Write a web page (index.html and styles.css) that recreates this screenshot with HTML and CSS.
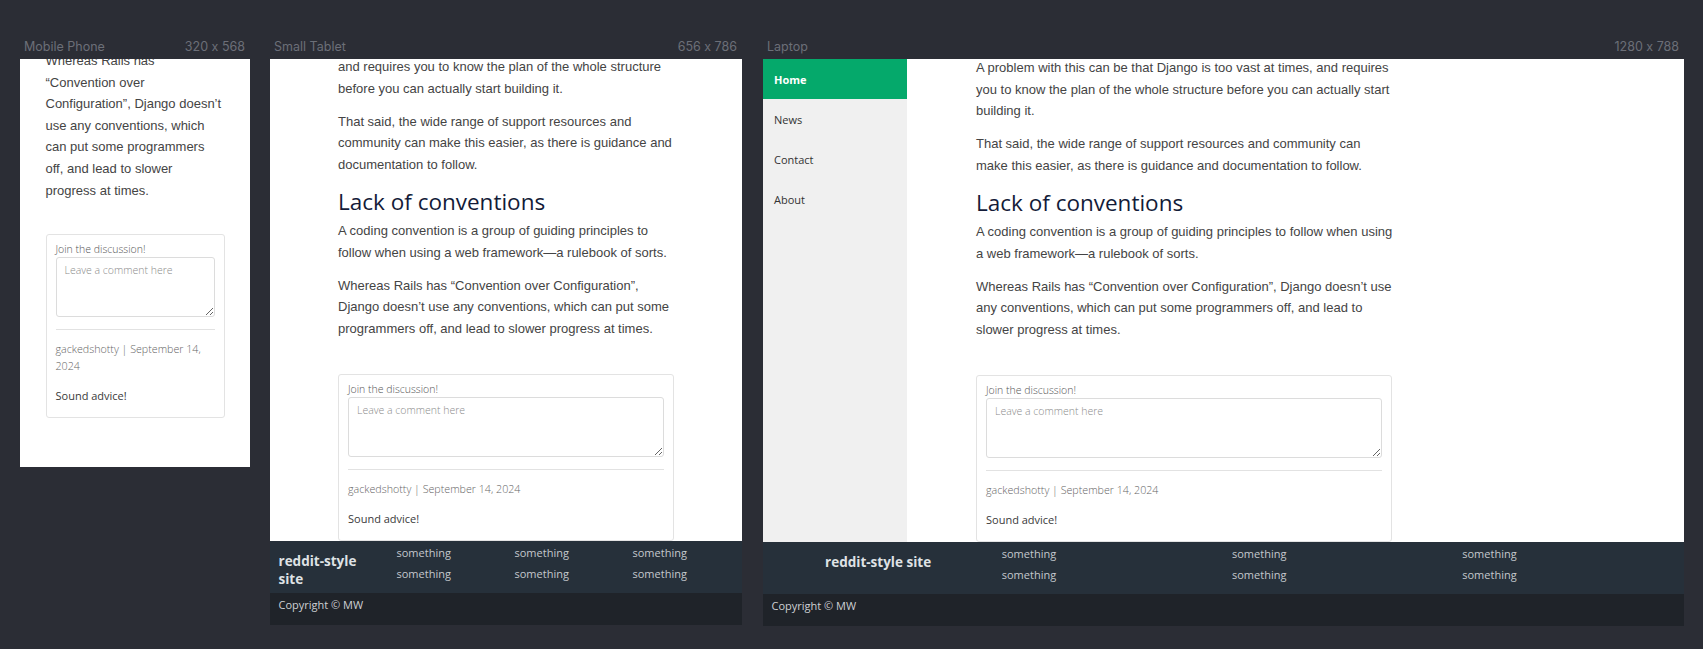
FILE: index.html
```html
<!DOCTYPE html>
<html lang="en">
<head>
<meta charset="utf-8">
<title>Responsive preview</title>
<link rel="stylesheet" href="styles.css">
</head>
<body>
<div class="stage">

  <section class="device device-phone">
    <header class="device-label"><span>Mobile Phone</span><span>320 x 568</span></header>
    <div class="screen">
      <div class="viewport">
        <article class="article">
          <p>Whereas Rails has “Convention over Configuration”, Django doesn’t use any conventions, which can put some programmers off, and lead to slower progress at times.</p>
          <div class="comments">
            <label class="comments-label">Join the discussion!</label>
            <textarea class="comments-input" placeholder="Leave a comment here"></textarea>
            <hr class="comments-rule">
            <p class="comment-meta">gackedshotty | September 14, 2024</p>
            <p class="comment-body">Sound advice!</p>
          </div>
        </article>
      </div>
    </div>
  </section>

  <section class="device device-tablet">
    <header class="device-label"><span>Small Tablet</span><span>656 x 786</span></header>
    <div class="screen">
      <div class="viewport">
        <article class="article">
          <p>and requires you to know the plan of the whole structure before you can actually start building it.</p>
          <p>That said, the wide range of support resources and community can make this easier, as there is guidance and documentation to follow.</p>
          <h2 class="article-heading">Lack of conventions</h2>
          <p>A coding convention is a group of guiding principles to follow when using a web framework—a rulebook of sorts.</p>
          <p>Whereas Rails has “Convention over Configuration”, Django doesn’t use any conventions, which can put some programmers off, and lead to slower progress at times.</p>
          <div class="comments">
            <label class="comments-label">Join the discussion!</label>
            <textarea class="comments-input" placeholder="Leave a comment here"></textarea>
            <hr class="comments-rule">
            <p class="comment-meta">gackedshotty | September 14, 2024</p>
            <p class="comment-body">Sound advice!</p>
          </div>
        </article>
      </div>
      <footer class="site-footer">
        <div class="footer-brand">reddit-style site</div>
        <ul class="footer-links"><li>something</li><li>something</li></ul>
        <ul class="footer-links"><li>something</li><li>something</li></ul>
        <ul class="footer-links"><li>something</li><li>something</li></ul>
      </footer>
      <div class="copyright">Copyright © MW</div>
    </div>
  </section>

  <section class="device device-laptop">
    <header class="device-label"><span>Laptop</span><span>1280 x 788</span></header>
    <div class="screen">
      <div class="viewport viewport-split">
        <nav class="sidebar">
          <a class="nav-item is-active">Home</a>
          <a class="nav-item">News</a>
          <a class="nav-item">Contact</a>
          <a class="nav-item">About</a>
        </nav>
        <main class="main">
          <article class="article">
            <p>A problem with this can be that Django is too vast at times, and requires you to know the plan of the whole structure before you can actually start building it.</p>
            <p>That said, the wide range of support resources and community can make this easier, as there is guidance and documentation to follow.</p>
            <h2 class="article-heading">Lack of conventions</h2>
            <p>A coding convention is a group of guiding principles to follow when using a web framework—a rulebook of sorts.</p>
            <p>Whereas Rails has “Convention over Configuration”, Django doesn’t use any conventions, which can put some programmers off, and lead to slower progress at times.</p>
            <div class="comments">
              <label class="comments-label">Join the discussion!</label>
              <textarea class="comments-input" placeholder="Leave a comment here"></textarea>
              <hr class="comments-rule">
              <p class="comment-meta">gackedshotty | September 14, 2024</p>
              <p class="comment-body">Sound advice!</p>
            </div>
          </article>
        </main>
      </div>
      <footer class="site-footer">
        <div class="footer-brand">reddit-style site</div>
        <ul class="footer-links"><li>something</li><li>something</li></ul>
        <ul class="footer-links"><li>something</li><li>something</li></ul>
        <ul class="footer-links"><li>something</li><li>something</li></ul>
      </footer>
      <div class="copyright">Copyright © MW</div>
    </div>
  </section>

</div>
</body>
</html>
```

FILE: styles.css
```css
html, body {
  margin: 0;
  background: #2b2d35;
}

body {
  font-family: "Inter", "Liberation Sans", sans-serif;
}

.stage {
  display: flex;
  align-items: flex-start;
  gap: 20px;
  padding: 39px 0 0 20px;
}

.device-phone { width: 230px; }
.device-tablet { width: 472px; }
.device-laptop { width: 921px; margin-left: 1px; }

.device-label {
  display: flex;
  justify-content: space-between;
  padding: 0 5px 0 4px;
  margin-bottom: 4px;
  font-size: 12.5px;
  line-height: 16px;
  font-weight: 400;
  color: #6c6f78;
  font-feature-settings: "calt" 0;
  font-variant-ligatures: none;
}

.screen {
  display: flex;
  flex-direction: column;
  background: #ffffff;
  overflow: hidden;
}

.device-phone .screen { height: 408px; }
.device-tablet .screen { height: 566px; }
.device-laptop .screen { height: 567px; }

.viewport {
  flex: 1;
  min-height: 0;
  overflow: hidden;
}

.viewport-split {
  display: flex;
}

/* article */
.article {
  font-family: "Liberation Sans", Arial, sans-serif;
  font-size: 13px;
  line-height: 21.6px;
  color: #444444;
}

.article p {
  margin: 0 0 11.5px;
}

.device-phone .article { width: 179px; margin: -9px auto 0; }
.device-tablet .article { width: 336px; margin: -3px auto 0; }
.device-laptop .article { width: 418.5px; margin: -2px 0 0 69px; }

.article-heading {
  margin: 12.5px 0 4px;
  font-family: "Open Sans", sans-serif;
  font-weight: 500;
  font-size: 22.5px;
  line-height: 28px;
  color: #131b38;
}

/* comments */
.comments {
  margin-top: 35px;
  padding: 8px 9px 9px;
  border: 1px solid #e3e3e3;
  border-radius: 3px;
  font-family: "Open Sans", sans-serif;
}

.device-phone .comments {
  margin-top: 33px;
}

.device-laptop .comments {
  margin-right: 2.5px;
}

.comments-label {
  display: block;
  font-weight: 300;
  font-size: 10.5px;
  line-height: 13px;
  color: #555555;
}

.comments-input {
  display: block;
  box-sizing: border-box;
  width: 100%;
  height: 60px;
  margin: 1px 0 0;
  padding: 6px 8px;
  border: 1px solid #dcdcdc;
  border-radius: 3px;
  font-family: "Open Sans", sans-serif;
  font-weight: 300;
  font-size: 10.5px;
  line-height: 13px;
  color: #444;
}

.comments-input::placeholder {
  color: #8c8c8c;
}

.comments-rule {
  margin: 11.5px 0;
  border: 0;
  border-top: 1px solid #e2e2e2;
}

.article .comment-meta {
  margin: 0 0 12px;
  font-weight: 300;
  font-size: 10.7px;
  line-height: 17px;
  color: #666666;
}

.article .comment-body {
  margin: 0 0 4px;
  font-size: 11px;
  line-height: 17px;
  color: #3a3a3a;
}

/* laptop sidebar */
.sidebar {
  flex: 0 0 144px;
  background: #f0f0f0;
}

.nav-item {
  display: flex;
  align-items: center;
  height: 40px;
  padding-left: 11px;
  font-family: "Open Sans", sans-serif;
  font-size: 11px;
  color: #333333;
}

.nav-item.is-active {
  background: #05a96b;
  color: #ffffff;
  font-weight: 700;
}

.main {
  flex: 1;
  min-width: 0;
}

/* footer */
.site-footer {
  display: grid;
  grid-template-columns: repeat(4, 1fr);
  align-items: start;
  background: #26303a;
  font-family: "Open Sans", sans-serif;
  color: #c4c8cd;
}

.footer-brand {
  padding: 12px 8.5px 4px;
  font-weight: 700;
  font-size: 13.5px;
  line-height: 17.3px;
  color: #dfe2e5;
}

.device-laptop .footer-brand {
  text-align: center;
}

.footer-links {
  margin: 0;
  padding: 1.5px 8.5px 8.5px;
  list-style: none;
  font-size: 11px;
  line-height: 20.8px;
}

.copyright {
  padding: 4px 8.5px 12px;
  background: #1f2329;
  font-family: "Open Sans", sans-serif;
  font-size: 11px;
  line-height: 16px;
  color: #cdd0d4;
}
```
